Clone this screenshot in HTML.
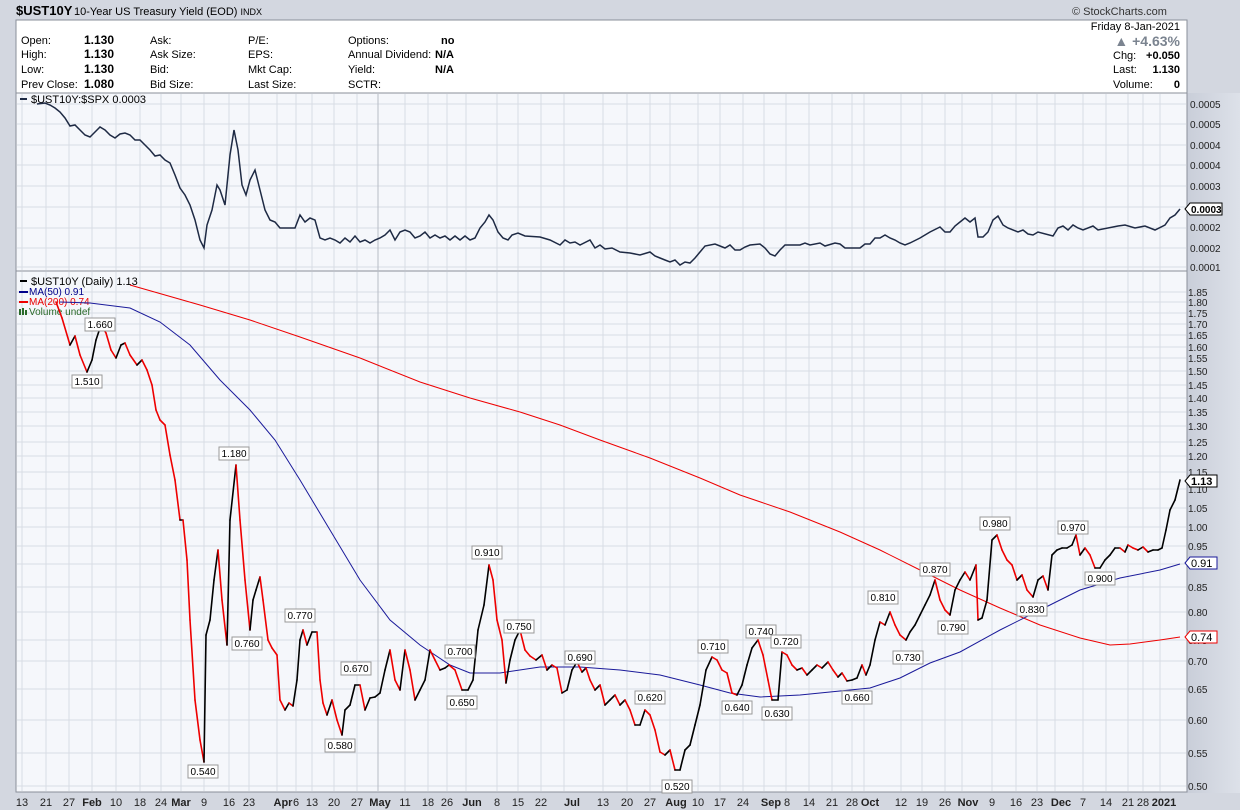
<!DOCTYPE html>
<html><head><meta charset="utf-8"><style>
body{margin:0;background:#d3d7e0;width:1240px;height:810px;overflow:hidden;font-family:"Liberation Sans",sans-serif}
svg{position:absolute;left:0;top:0}
text{font-family:"Liberation Sans",sans-serif}
</style></head><body>
<svg width="1240" height="810" viewBox="0 0 1240 810" id="s">
<defs><linearGradient id="bg" x1="0" x2="1"><stop offset="0" stop-color="#c9ced9"/><stop offset="1" stop-color="#dde1e9"/></linearGradient></defs>
<rect width="1240" height="810" fill="#d3d7e0"/>
<rect x="1187" y="93" width="53" height="700" fill="url(#bg)"/>
<rect x="16" y="20" width="1171" height="73" fill="#fff" stroke="#8a8f9a"/>
<rect x="16" y="93" width="1171" height="178" fill="#f5f7fb" stroke="#8a8f9a"/>
<rect x="16" y="271" width="1171" height="521" fill="#f5f7fb" stroke="#8a8f9a"/>
<g id="grid" stroke="#d8dce4" stroke-width="1"></g>
<text x="16" y="15" font-size="13" font-weight="bold">$UST10Y</text>
<text x="74" y="15" font-size="11">10-Year US Treasury Yield (EOD) <tspan font-size="9">INDX</tspan></text>
<text x="1072" y="15" font-size="11" fill="#333">© StockCharts.com</text>
<g font-size="11">
<text x="21" y="44">Open:</text><text x="21" y="58">High:</text><text x="21" y="73">Low:</text><text x="21" y="88">Prev Close:</text>
<g font-weight="bold" font-size="12"><text x="84" y="44">1.130</text><text x="84" y="58">1.130</text><text x="84" y="73">1.130</text><text x="84" y="88">1.080</text></g>
<text x="150" y="44">Ask:</text><text x="150" y="58">Ask Size:</text><text x="150" y="73">Bid:</text><text x="150" y="88">Bid Size:</text>
<text x="248" y="44">P/E:</text><text x="248" y="58">EPS:</text><text x="248" y="73">Mkt Cap:</text><text x="248" y="88">Last Size:</text>
<text x="348" y="44">Options:</text><text x="348" y="58">Annual Dividend:</text><text x="348" y="73">Yield:</text><text x="348" y="88">SCTR:</text>
<g font-weight="bold"><text x="441" y="44">no</text><text x="435" y="58">N/A</text><text x="435" y="73">N/A</text></g>
<g text-anchor="end"><text x="1180" y="30">Friday  8-Jan-2021</text>
<text x="1180" y="46" font-size="14" font-weight="bold" fill="#7b8490">▲ +4.63%</text>
<text x="1180" y="59" font-weight="bold">+0.050</text><text x="1180" y="73" font-weight="bold">1.130</text><text x="1180" y="88" font-weight="bold">0</text></g>
<text x="1113" y="59">Chg:</text><text x="1113" y="73">Last:</text><text x="1113" y="88">Volume:</text>
</g>
<g font-size="11">
<line x1="20" y1="99" x2="27" y2="99" stroke="#1e2a44" stroke-width="2"/>
<text x="31" y="103" font-family="Liberation Mono,monospace">$UST10Y:$SPX 0.0003</text>
<line x1="20" y1="281" x2="27" y2="281" stroke="#000" stroke-width="2"/>
<text x="31" y="285" font-family="Liberation Mono,monospace">$UST10Y (Daily) 1.13</text>
</g>
<g font-size="10">
<line x1="19" y1="292" x2="28" y2="292" stroke="#00008b" stroke-width="2"/><text x="29" y="295" fill="#00008b">MA(50) 0.91</text>
<line x1="19" y1="302" x2="28" y2="302" stroke="#e00" stroke-width="2"/><text x="29" y="305" fill="#e00">MA(200) 0.74</text>
<rect x="19" y="309" width="2" height="6" fill="#2a6a2a"/><rect x="22" y="308" width="2" height="7" fill="#2a6a2a"/><rect x="25" y="310" width="2" height="5" fill="#2a6a2a"/><text x="29" y="315" fill="#2a6a2a">Volume undef</text>
</g>
<g font-size="10" fill="#222">
<text x="1190" y="108">0.0005</text><text x="1190" y="128">0.0005</text><text x="1190" y="149">0.0004</text><text x="1190" y="169">0.0004</text><text x="1190" y="190">0.0003</text><text x="1190" y="231">0.0002</text><text x="1190" y="252">0.0002</text><text x="1190" y="271">0.0001</text>
</g>
<path d="M1185 209 l5 -6 h32 v12 h-32z" fill="#fff" stroke="#000"/><text x="1191" y="213" font-size="10" font-weight="bold">0.0003</text>
<g font-size="10" fill="#222">
<text x="1188" y="296">1.85</text><text x="1188" y="306">1.80</text><text x="1188" y="317">1.75</text><text x="1188" y="328">1.70</text><text x="1188" y="339">1.65</text><text x="1188" y="351">1.60</text><text x="1188" y="362">1.55</text><text x="1188" y="375">1.50</text><text x="1188" y="389">1.45</text><text x="1188" y="402">1.40</text><text x="1188" y="416">1.35</text><text x="1188" y="430">1.30</text><text x="1188" y="446">1.25</text><text x="1188" y="460">1.20</text><text x="1188" y="476">1.15</text><text x="1188" y="493">1.10</text><text x="1188" y="512">1.05</text><text x="1188" y="531">1.00</text><text x="1188" y="550">0.95</text><text x="1188" y="568">0.90</text><text x="1188" y="591">0.85</text><text x="1188" y="616">0.80</text><text x="1188" y="644">0.75</text><text x="1188" y="665">0.70</text><text x="1188" y="693">0.65</text><text x="1188" y="724">0.60</text><text x="1188" y="757">0.55</text><text x="1188" y="790">0.50</text>
</g>
<polyline id="ratio" fill="none" stroke="#1e2a44" stroke-width="1.5"/>
<polyline id="ma200" fill="none" stroke="#e00" stroke-width="1"/>
<polyline id="ma50" fill="none" stroke="#1a1a9a" stroke-width="1"/>
<g id="price" fill="none" stroke-width="1.6"></g>
<g id="lbls" font-size="10" text-anchor="middle">
<text x="100" y="328">1.660</text><text x="87" y="385">1.510</text><text x="234" y="457">1.180</text><text x="247" y="647">0.760</text><text x="203" y="775">0.540</text><text x="300" y="619">0.770</text><text x="356" y="672">0.670</text><text x="340" y="749">0.580</text><text x="460" y="655">0.700</text><text x="462" y="706">0.650</text><text x="487" y="556">0.910</text><text x="519" y="630">0.750</text><text x="580" y="661">0.690</text><text x="650" y="701">0.620</text><text x="677" y="790">0.520</text><text x="713" y="650">0.710</text><text x="737" y="711">0.640</text><text x="761" y="635">0.740</text><text x="786" y="645">0.720</text><text x="777" y="717">0.630</text><text x="857" y="701">0.660</text><text x="883" y="601">0.810</text><text x="908" y="661">0.730</text><text x="935" y="573">0.870</text><text x="953" y="631">0.790</text><text x="995" y="527">0.980</text><text x="1032" y="613">0.830</text><text x="1073" y="531">0.970</text><text x="1100" y="582">0.900</text>
</g>
<path d="M1185 481 l5 -6 h27 v12 h-27z" fill="#fff" stroke="#000"/><text x="1191" y="485" font-size="11" font-weight="bold">1.13</text>
<path d="M1185 563 l5 -6 h27 v12 h-27z" fill="#fff" stroke="#1a1a9a"/><text x="1191" y="567" font-size="11">0.91</text>
<path d="M1185 637 l5 -6 h27 v12 h-27z" fill="#fff" stroke="#e00"/><text x="1191" y="641" font-size="11">0.74</text>
<g font-size="11" fill="#222" text-anchor="middle">
<text x="22" y="806">13</text><text x="46" y="806">21</text><text x="69" y="806">27</text><text x="92" y="806" font-weight="bold">Feb</text><text x="116" y="806">10</text><text x="140" y="806">18</text><text x="161" y="806">24</text><text x="181" y="806" font-weight="bold">Mar</text><text x="204" y="806">9</text><text x="229" y="806">16</text><text x="249" y="806">23</text><text x="283" y="806" font-weight="bold">Apr</text><text x="296" y="806">6</text><text x="312" y="806">13</text><text x="334" y="806">20</text><text x="357" y="806">27</text><text x="380" y="806" font-weight="bold">May</text><text x="405" y="806">11</text><text x="428" y="806">18</text><text x="447" y="806">26</text><text x="472" y="806" font-weight="bold">Jun</text><text x="497" y="806">8</text><text x="518" y="806">15</text><text x="541" y="806">22</text><text x="572" y="806" font-weight="bold">Jul</text><text x="603" y="806">13</text><text x="627" y="806">20</text><text x="650" y="806">27</text><text x="676" y="806" font-weight="bold">Aug</text><text x="698" y="806">10</text><text x="720" y="806">17</text><text x="743" y="806">24</text><text x="771" y="806" font-weight="bold">Sep</text><text x="787" y="806">8</text><text x="809" y="806">14</text><text x="832" y="806">21</text><text x="852" y="806">28</text><text x="870" y="806" font-weight="bold">Oct</text><text x="901" y="806">12</text><text x="922" y="806">19</text><text x="945" y="806">26</text><text x="968" y="806" font-weight="bold">Nov</text><text x="992" y="806">9</text><text x="1016" y="806">16</text><text x="1037" y="806">23</text><text x="1061" y="806" font-weight="bold">Dec</text><text x="1083" y="806">7</text><text x="1106" y="806">14</text><text x="1128" y="806">21</text><text x="1143" y="806">28</text><text x="1164" y="806" font-weight="bold">2021</text>
</g>
</svg>
<script>
var NS="http://www.w3.org/2000/svg";
function el(t,a,p){var e=document.createElementNS(NS,t);for(var k in a)e.setAttribute(k,a[k]);p.appendChild(e);return e;}
var g=document.getElementById('grid');
[22,46,69,92,116,140,161,181,204,229,249,277,296,312,334,357,378,405,428,447,466,497,518,541,564,603,627,650,670,698,720,743,764,786,809,832,852,864,901,922,945,962,992,1016,1037,1055,1083,1106,1128,1143,1160].forEach(function(x){
 el('line',{x1:x,y1:94,x2:x,y2:270},g);el('line',{x1:x,y1:272,x2:x,y2:791},g);});
[292,302,313,324,335,347,358,371,385,398,412,426,442,456,472,489,508,527,546,564,587,612,640,661,689,720,753,786].forEach(function(y){el('line',{x1:17,y1:y,x2:1186,y2:y},g);});
[104,124,145,165,186,207,228,248,267].forEach(function(y){el('line',{x1:17,y1:y,x2:1186,y2:y},g);});
el('line',{x1:378,y1:94,x2:378,y2:791,stroke:'#b8bcc6'},g);
var price=[[56,302],[62,318],[70,345],[75,336],[80,355],[87,372],[92,360],[96,340],[101,325],[106,333],[111,350],[116,358],[121,345],[125,343],[130,355],[137,365],[142,360],[147,370],[152,385],[156,410],[160,420],[165,425],[170,455],[175,480],[180,520],[183,520],[187,560],[190,620],[195,700],[200,740],[204,762],[206,635],[210,620],[214,580],[218,550],[222,600],[227,645],[230,520],[236,465],[240,520],[245,580],[250,630],[253,600],[256,590],[260,577],[263,600],[268,640],[272,648],[277,655],[280,700],[285,710],[289,703],[293,706],[297,680],[300,640],[303,630],[307,645],[312,632],[317,632],[320,680],[323,703],[327,715],[332,700],[337,720],[342,735],[345,710],[350,705],[355,685],[360,685],[365,710],[370,698],[375,697],[380,693],[385,670],[390,650],[395,680],[400,690],[405,650],[410,670],[415,700],[420,690],[425,680],[430,650],[435,660],[440,670],[445,668],[449,665],[455,670],[462,690],[468,690],[473,680],[478,630],[484,605],[489,565],[493,580],[497,620],[502,640],[506,683],[510,660],[515,640],[520,630],[525,650],[530,656],[536,660],[542,655],[547,670],[552,665],[557,668],[562,693],[567,690],[572,670],[577,662],[582,672],[586,668],[590,680],[595,690],[600,685],[605,705],[610,700],[615,695],[620,705],[625,700],[630,710],[635,725],[640,725],[645,710],[650,715],[655,730],[660,752],[665,755],[670,750],[675,770],[680,770],[685,750],[690,745],[695,725],[700,705],[706,670],[712,657],[717,660],[722,670],[727,673],[732,693],[737,695],[742,685],[747,665],[752,648],[758,640],[763,655],[768,680],[772,700],[778,700],[782,652],[787,655],[792,665],[797,670],[802,668],[807,675],[812,670],[817,665],[822,668],[828,662],[833,670],[838,677],[842,673],[847,681],[852,680],[857,678],[862,665],[866,675],[870,665],[875,640],[880,622],[885,625],[890,612],[895,625],[900,635],[906,640],[910,632],[915,625],[920,615],[925,605],[930,595],[935,580],[940,600],[945,610],[950,615],[955,590],[960,580],[965,572],[970,580],[976,565],[978,620],[982,618],[987,600],[992,540],[997,535],[1002,550],[1007,560],[1012,565],[1017,580],[1022,575],[1027,590],[1033,597],[1038,580],[1043,576],[1048,590],[1052,555],[1057,550],[1062,548],[1067,548],[1072,545],[1076,535],[1080,555],[1085,548],[1090,555],[1095,568],[1100,568],[1105,560],[1110,555],[1115,548],[1120,548],[1125,552],[1128,545],[1133,548],[1138,550],[1143,547],[1148,552],[1153,550],[1158,550],[1162,548],[1166,530],[1170,510],[1175,500],[1180,480]];
var pg=document.getElementById('price');
for(var i=1;i<price.length;i++){var a=price[i-1],b=price[i];el('line',{x1:a[0],y1:a[1],x2:b[0],y2:b[1],stroke:b[1]>a[1]?'#e00':'#000','stroke-linecap':'round'},pg);}
function pl(id,arr){document.getElementById(id).setAttribute('points',arr.map(function(p){return p.join(',')}).join(' '));}
pl('ma200',[[130,285],[200,305],[250,320],[300,337],[360,358],[420,382],[470,398],[520,412],[560,425],[600,440],[650,458],[700,478],[740,495],[790,512],[840,532],[880,550],[920,570],[960,590],[1000,608],[1040,625],[1080,638],[1110,645],[1130,644],[1160,640],[1180,637]]);
pl('ma50',[[60,302],[90,303],[130,308],[160,322],[190,345],[220,380],[250,410],[275,440],[300,480],[330,530],[360,580],[390,620],[420,645],[450,665],[470,673],[500,673],[540,667],[580,667],[620,670],[660,675],[700,685],[730,693],[760,697],[800,695],[840,691],[870,688],[900,678],[930,663],[960,652],[1000,630],[1040,610],[1080,590],[1120,578],[1160,570],[1180,564]]);
pl('ratio',[[37,104],[45,103],[50,105],[55,108],[60,112],[65,118],[70,126],[75,125],[80,130],[85,135],[90,137],[95,132],[100,127],[105,130],[110,135],[115,138],[120,134],[125,133],[130,135],[135,140],[140,140],[145,145],[150,150],[155,156],[160,155],[165,160],[170,163],[175,175],[180,188],[185,195],[190,205],[195,220],[200,240],[204,248],[207,225],[212,210],[217,185],[220,190],[225,205],[230,155],[234,130],[238,150],[242,185],[246,195],[250,180],[255,170],[260,190],[265,210],[270,220],[275,222],[280,228],[295,228],[300,215],[305,222],[310,218],[315,220],[320,238],[325,240],[330,238],[335,240],[340,243],[345,238],[350,242],[355,236],[360,242],[365,240],[370,243],[375,240],[380,238],[385,235],[390,230],[395,240],[400,232],[405,230],[410,232],[415,238],[420,236],[425,232],[430,238],[435,235],[440,238],[445,236],[450,240],[455,236],[460,240],[465,236],[470,240],[475,238],[480,228],[485,222],[489,215],[493,220],[498,232],[503,238],[508,240],[512,235],[518,233],[525,236],[540,237],[550,240],[560,245],[565,240],[570,243],[575,242],[580,245],[590,240],[595,248],[600,245],[605,249],[612,248],[620,252],[630,253],[640,255],[650,252],[655,256],[660,258],[665,260],[670,262],[675,260],[680,265],[685,262],[690,263],[695,258],[700,252],[705,246],[715,244],[720,246],[725,248],[730,245],[735,250],[740,250],[745,247],[750,245],[760,244],[765,248],[770,254],[775,256],[780,250],[785,245],[800,245],[805,243],[810,245],[820,243],[825,246],[835,243],[840,244],[845,248],[860,248],[865,244],[870,244],[875,238],[880,238],[885,235],[890,238],[895,240],[900,243],[905,245],[910,243],[920,238],[930,232],[940,227],[945,232],[950,232],[955,226],[960,222],[965,218],[970,222],[975,218],[978,237],[983,237],[988,232],[993,220],[998,216],[1003,225],[1008,228],[1018,232],[1023,230],[1028,234],[1033,235],[1038,232],[1053,236],[1058,228],[1063,226],[1068,230],[1073,225],[1078,228],[1083,230],[1093,226],[1098,230],[1118,226],[1125,225],[1135,228],[1145,226],[1155,230],[1165,225],[1170,218],[1175,215],[1180,209]]);
var lb=document.getElementById('lbls');
Array.prototype.slice.call(lb.querySelectorAll('text')).forEach(function(t){var x=+t.getAttribute('x'),y=+t.getAttribute('y');
 var r=el('rect',{x:x-15,y:y-10,width:30,height:13,fill:'#fff',stroke:'#999'},lb);lb.insertBefore(r,t);});
</script>
</body></html>
